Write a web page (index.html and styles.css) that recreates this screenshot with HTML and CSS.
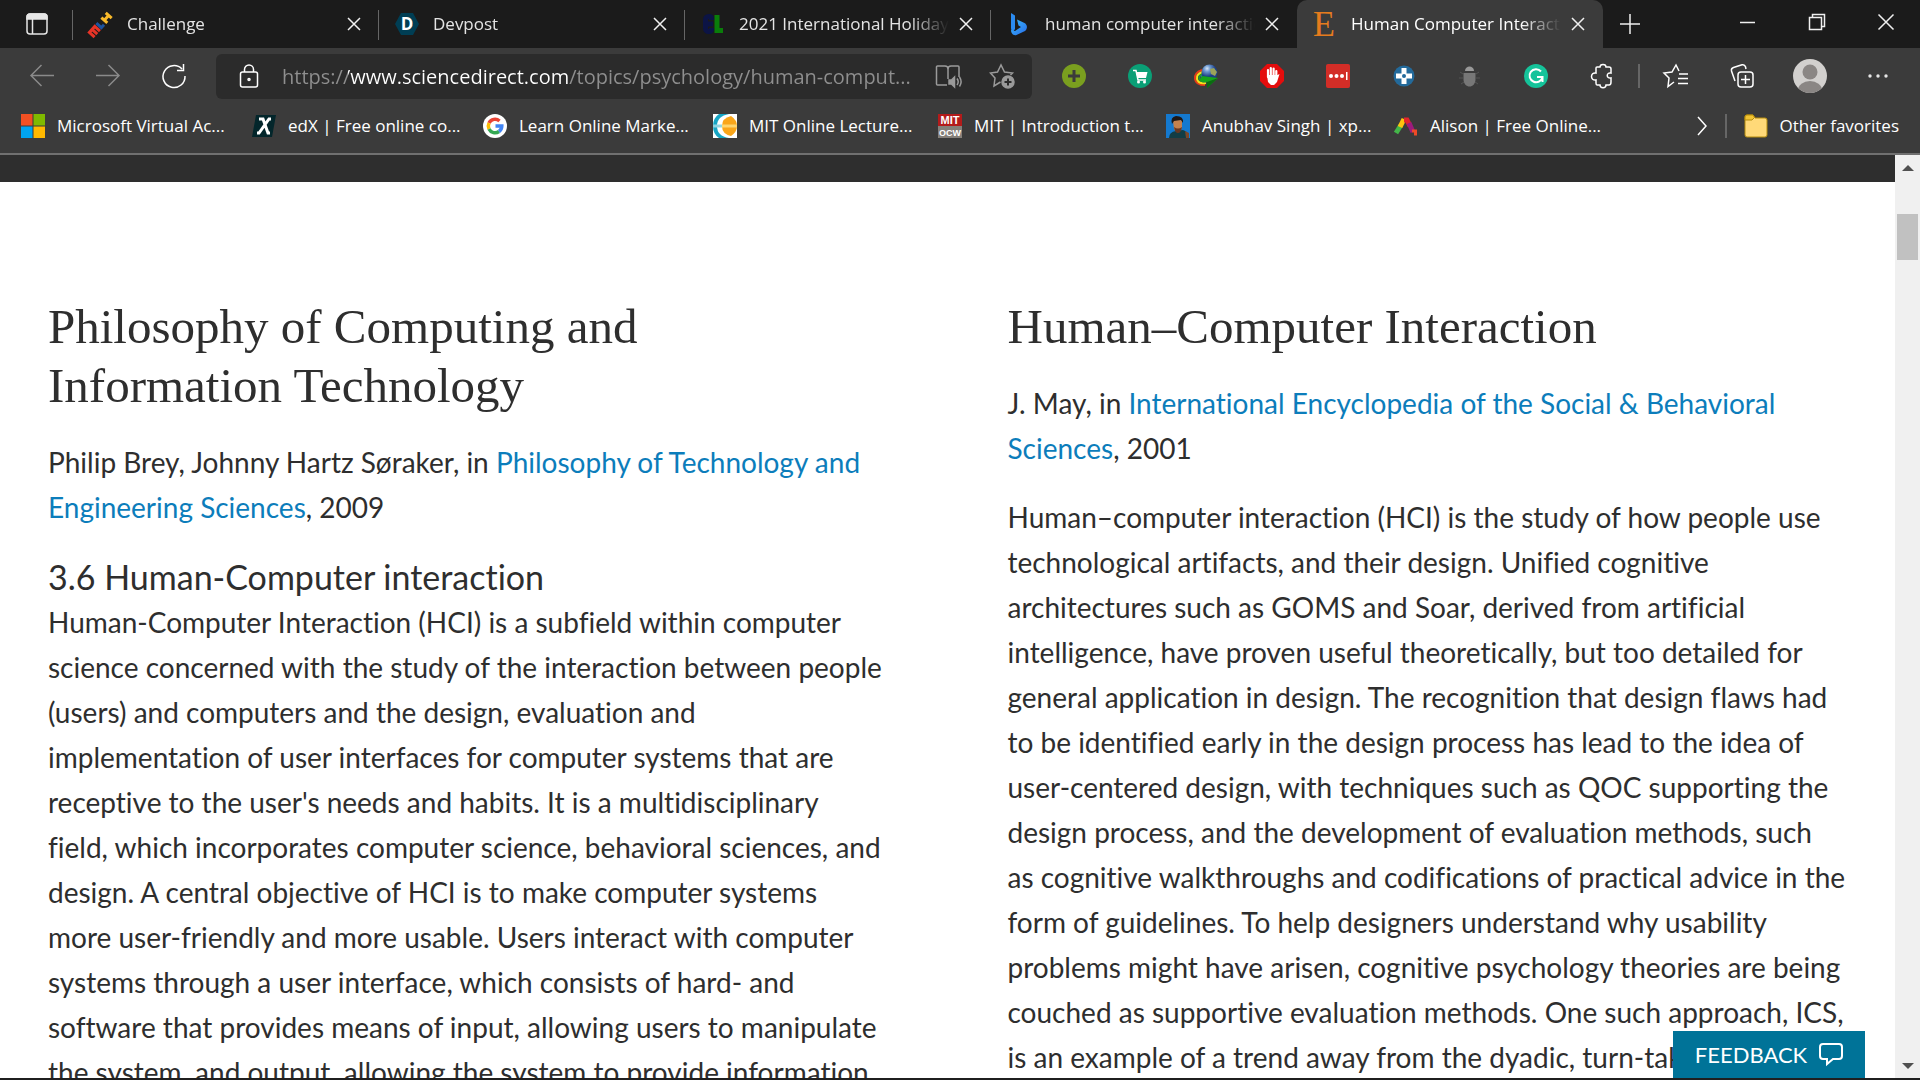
FILE: index.html
```html
<!DOCTYPE html>
<html lang="en">
<head>
    <meta charset="UTF-8">
    <meta name="viewport" content="width=device-width, initial-scale=1.0">
    <title>Human Computer Interaction</title>
    <link rel="stylesheet" href="styles.css">
</head>
<body>

    <header class="browser">
        <!-- Tabs -->
        <div class="tab-bar">
            <button class="tab-menu" aria-label="Tab actions">
                <svg width="22" height="22" viewBox="0 0 22 22" fill="none" stroke="#e6e6e6" stroke-width="1.5"><rect x="1" y="1" width="20" height="20" rx="3"/><path d="M1 6V4a3 3 0 0 1 3-3h14a3 3 0 0 1 3 3v2z" fill="#e6e6e6"/><path d="M6.500 6v15"/></svg>
            </button>
            <div class="tab">
                <svg class="icon" viewBox="0 0 24 24" fill="none" stroke-width="3"><g transform="rotate(-48 12 12)"><path d="M-2 16V9h8v7M2 9v7" stroke="#e73427"/><path d="M9.500 8v6.700h4" stroke="#1d539f"/><path d="M17 8v8M23.500 8v8M17 12h6" stroke="#f8b92a"/></g></svg>
                <span class="tab-title">Challenge</span>
                <button class="close" aria-label="Close tab"><svg width="14" height="14" viewBox="0 0 14 14"><path d="M1 1l12 12M13 1L1 13"/></svg></button>
            </div>
            <div class="tab">
                <svg class="icon" viewBox="0 0 24 24"><path d="M6 1h12l6 11-6 11H6L0 12z" fill="#003e54"/><text x="12" y="18" text-anchor="middle" class="logo-d">D</text></svg>
                <span class="tab-title">Devpost</span>
                <button class="close" aria-label="Close tab"><svg width="14" height="14" viewBox="0 0 14 14"><path d="M1 1l12 12M13 1L1 13"/></svg></button>
            </div>
            <div class="tab">
                <svg class="icon" viewBox="0 0 24 24" fill="none" stroke-width="5"><path d="M10.500 8V6.500a2 2 0 0 0-2-2h-1a3 3 0 0 0-3 3v9a3 3 0 0 0 3 3h1a2 2 0 0 0 2-2V16M6 12h6" stroke="#0c1445"/><path d="M16 3v15.500h6" stroke="#0a7d0a"/></svg>
                <span class="tab-title">2021 International Holiday Hack</span>
                <button class="close" aria-label="Close tab"><svg width="14" height="14" viewBox="0 0 14 14"><path d="M1 1l12 12M13 1L1 13"/></svg></button>
            </div>
            <div class="tab">
                <svg class="icon" viewBox="0 0 24 24"><defs><linearGradient id="bing" x1="0" y1="0" x2="1" y2="1"><stop offset="0" stop-color="#37bdff"/><stop offset="1" stop-color="#2a6be8"/></linearGradient></defs><path d="M4 1l4 2.500V17l-2 3c-1-.500-2-2-2-4z" fill="#2b8bf0"/><path d="M10 7.500l7 3.200c4 2 3.500 6 1 8.300L9.500 23C6 24 4 21 4 18l4 1 6-4-2.500-1.500z" fill="url(#bing)"/></svg>
                <span class="tab-title">human computer interaction</span>
                <button class="close" aria-label="Close tab"><svg width="14" height="14" viewBox="0 0 14 14"><path d="M1 1l12 12M13 1L1 13"/></svg></button>
            </div>
            <div class="tab active">
                <span class="icon logo-e">E</span>
                <span class="tab-title">Human Computer Interaction</span>
                <button class="close" aria-label="Close tab"><svg width="14" height="14" viewBox="0 0 14 14"><path d="M1 1l12 12M13 1L1 13"/></svg></button>
            </div>
            <button class="new-tab" aria-label="New tab"><svg width="22" height="22" viewBox="0 0 22 22"><path d="M11 1v20M1 11h20"/></svg></button>
            <div class="window-buttons">
                <button aria-label="Minimize"><svg width="16" height="16" viewBox="0 0 16 16"><path d="M0 8.500h15"/></svg></button>
                <button aria-label="Restore"><svg width="16" height="16" viewBox="0 0 16 16"><path d="M.500 3.500h12v12H.500zM3.500 3V.500h12v12H13"/></svg></button>
                <button aria-label="Close"><svg width="16" height="16" viewBox="0 0 16 16"><path d="M.500.500l15 15M15.500.500l-15 15"/></svg></button>
            </div>
        </div>

        <!-- Address bar and extensions -->
        <div class="toolbar">
            <button class="tool dim" aria-label="Back"><svg class="icon line" viewBox="0 0 24 24"><path d="M24 11.500H1M11.500 1L1 11.500 11.500 22"/></svg></button>
            <button class="tool dim" aria-label="Forward"><svg class="icon line" viewBox="0 0 24 24"><path d="M0 11.500h23M12.500 1L23 11.500 12.500 22"/></svg></button>
            <button class="tool" aria-label="Refresh"><svg class="icon line" viewBox="0 0 24 24"><path d="M20 5A11 11 0 1 0 23 12M21.500 0v6.500H15"/></svg></button>
            <div class="address">
                <button class="site-info" aria-label="Site information"><svg class="icon line" viewBox="0 0 24 24"><rect x="3.500" y="8" width="17" height="15" rx="2"/><path d="M7.500 8V5.500a4.500 4.500 0 0 1 9 0V8"/><circle cx="12" cy="15.500" r="1"/></svg></button>
                <input class="url" type="text" aria-label="Address" value="https://www.sciencedirect.com/topics/psychology/human-comput...">
                <button class="in-address" aria-label="Immersive reader"><svg class="icon line" viewBox="0 0 24 24"><path d="M11 21H1.500a1 1 0 0 1-1-1V3a1 1 0 0 1 1-1H9a3 3 0 0 1 3 3v10M12 5a3 3 0 0 1 3-3h7a1 1 0 0 1 1 1v10M21 14.500c1.500 2 1.500 4.500 0 6.500M23.500 13c2 3 2 6.500 0 9.500"/><path d="M13 16h2.500l3-3v10l-3-3H13z" fill="currentColor"/></svg></button>
                <button class="in-address" aria-label="Add to favorites"><svg class="icon line" viewBox="0 0 24 24"><path d="M10.500 18L4 22l1-8-4.500-5 7-1L11 1l3.500 7 8 1-2 2"/><circle cx="18" cy="18" r="6" fill="currentColor"/><path d="M18 14.500v7M14.500 18h7" stroke="#2b2b2b" stroke-width="2"/></svg></button>
            </div>
            <button class="tool" aria-label="Add extension"><svg class="icon" viewBox="0 0 24 24"><circle cx="12" cy="12" r="12" fill="#7a9f1f"/><path d="M12 6v12M6 12h12" stroke="#3b3b3b" stroke-width="3"/></svg></button>
            <button class="tool" aria-label="Shopping"><svg class="icon" viewBox="0 0 24 24"><circle cx="12" cy="12" r="12" fill="#0a9f76"/><path d="M5 6.500h3l2 9.500h8" fill="none" stroke="#fff" stroke-width="1.500"/><path d="M8 8h11.500L18 14H9.500z" fill="#fff"/><circle cx="10.500" cy="18" r="1.500" fill="#fff"/><circle cx="16.500" cy="18" r="1.500" fill="#fff"/></svg></button>
            <button class="tool" aria-label="Download manager"><svg class="icon" viewBox="0 0 24 24"><defs><radialGradient id="globe" cx=".35" cy=".25"><stop offset="0" stop-color="#d9e6f7"/><stop offset=".4" stop-color="#6d99d0"/><stop offset="1" stop-color="#1d3f86"/></radialGradient></defs><g fill="none" stroke-width="2"><path d="M8 6Q0 9 1 15t10 6" stroke="#e33d18"/><path d="M9 8Q2 10 3 15t9 4" stroke="#f5e31c"/><path d="M9 10Q4 12 5.500 15t7 2.500" stroke="#1f9a35"/><path d="M10 11Q6 13 9 15.500" stroke="#2b5fd0"/></g><circle cx="15.500" cy="8.500" r="8" fill="url(#globe)"/><path d="M16 5l4-1 3 4-2 4-4-2z" fill="#9ba35a"/><path d="M8 12l16 2-11 10v-6l-8-1z" fill="#16a51b"/><path d="M13 18l11-4-11 10z" fill="#0b6a12"/></svg></button>
            <button class="tool" aria-label="Ad blocker"><svg class="icon" viewBox="0 0 24 24"><path d="M7 0h10l7 7v10l-7 7H7l-7-7V7z" fill="#e40d0d"/><path d="M8 13V6M10.800 12V4M13.600 12V4.500M16.300 13V7" stroke="#fff" stroke-width="2.200" stroke-linecap="round"/><path d="M7 11h10.500l2-1-2.500 8-3 3h-3l-3-3z" fill="#fff"/></svg></button>
            <button class="tool" aria-label="Passwords"><svg class="icon" viewBox="0 0 24 24"><rect width="24" height="24" rx="2" fill="#d32d27"/><g fill="#fff"><circle cx="5" cy="12" r="2"/><circle cx="10.500" cy="12" r="2"/><circle cx="16" cy="12" r="2"/><path d="M20 8h1.500v8H20z"/></g></svg></button>
            <button class="tool" aria-label="Health"><svg class="icon" viewBox="0 0 24 24"><circle cx="12" cy="12" r="10.500" fill="#236a9b"/><path d="M9.500 4h5v5.500H20v5h-5.500V20h-5v-5.500H4v-5h5.500z" fill="#fff"/><circle cx="12" cy="12" r="2" fill="#236a9b"/></svg></button>
            <button class="tool" aria-label="Bug tool"><svg class="icon" viewBox="0 0 24 24"><path d="M7 7c0-6 9-6 9 0z" fill="#999"/><path d="M5.500 9h12v6c0 10-12 10-12 0z" fill="#777"/><path d="M2 8l3 2M21 8l-3 2M1 14h4M22 14h-4M3 20l3-2M20 20l-3-2" stroke="#555"/></svg></button>
            <button class="tool" aria-label="Grammar"><svg class="icon" viewBox="0 0 24 24"><circle cx="12" cy="12" r="12" fill="#15c39a"/><path d="M17 7.500A6.500 6.500 0 1 0 18.500 12.500M13 13h5.500v5" fill="none" stroke="#fff" stroke-width="2"/></svg></button>
            <button class="tool" aria-label="Extensions"><svg class="icon line" viewBox="0 0 24 24"><path d="M6 4q0-1 1-1h3c0-3.500 6-3.500 6 0h3q2 0 2 2v4c-5-1-5 6 0 5v4q0 3-2 3h-3c0 3.500-6 3.500-6 0H7q-1 0-1-2v-3c-6 1-6-8 0-7z"/></svg></button>
            <span class="divider"></span>
            <button class="tool" aria-label="Favorites"><svg class="icon line" viewBox="0 0 24 24"><path d="M10 18l-6 4.500 1-8.500-5-5 8-1 4-7 3 6M15 10h9M14 14.500h10M14 19.500h10"/></svg></button>
            <button class="tool" aria-label="Collections"><svg class="icon line" viewBox="0 0 24 24"><rect x="8" y="8" width="15" height="15" rx="3"/><path d="M15.500 11v9M11 15.500h9M5 17L1.500 7a3 3 0 0 1 2-3.500L12 .800a3 3 0 0 1 3.500 2L16 5"/></svg></button>
            <button class="tool profile" aria-label="Profile"><svg width="34" height="34" viewBox="0 0 34 34"><defs><clipPath id="face"><circle cx="17" cy="17" r="17"/></clipPath></defs><g clip-path="url(#face)"><path d="M0 0h34v34H0z" fill="#d2d0ce"/><circle cx="17" cy="13" r="7.500" fill="#8a8684"/><ellipse cx="17" cy="31" rx="12" ry="9" fill="#8a8684"/></g></svg></button>
            <button class="tool" aria-label="Settings and more"><svg width="20" height="4" viewBox="0 0 20 4" fill="#e6e6e6"><circle cx="2" cy="2" r="1.700"/><circle cx="10" cy="2" r="1.700"/><circle cx="18" cy="2" r="1.700"/></svg></button>
        </div>

        <!-- Favorites -->
        <nav class="favorites">
            <div class="favorites-list">
                <a href="#"><svg class="icon" viewBox="0 0 24 24"><path d="M0 0h11.500v11.500H0z" fill="#f25022"/><path d="M12.500 0H24v11.500H12.500z" fill="#7fba00"/><path d="M0 12.500h11.500V24H0z" fill="#00a4ef"/><path d="M12.500 12.500H24V24H12.500z" fill="#ffb900"/></svg>Microsoft Virtual Ac...</a>
                <a href="#"><svg class="icon" viewBox="0 0 24 24"><path d="M4 1h20l-4 22H0z" fill="#03262b"/><path d="M7 5h4l5 14h2M19 5h-2L7 19H5" fill="none" stroke="#fff" stroke-width="3"/></svg>edX | Free online co...</a>
                <a href="#"><svg class="icon" viewBox="0 0 24 24" fill="none" stroke-width="3.500"><circle cx="12" cy="12" r="12" fill="#fff"/><path d="M16.500 7A6.700 6.700 0 0 0 6 9" stroke="#ea4335"/><path d="M6 9a7 7 0 0 0 0 6" stroke="#fbbc05"/><path d="M6 15a6.700 6.700 0 0 0 10 2.500" stroke="#34a853"/><path d="M12.500 12h6.300q0 3.500-2.800 5.500" stroke="#4285f4"/></svg>Learn Online Marke...</a>
                <a href="#"><svg class="icon" viewBox="0 0 24 24"><path d="M0 0h24v24H0z" fill="#fff"/><path d="M16 0Q4 2 4 12t12 12H6Q0 20 0 12T6 0z" fill="#16a5c4"/><path d="M0 10.500h9v3H0z" fill="#8fd5e2"/><path d="M18 2q6 4 6 10t-6 10Q9 20 9 12t9-10z" fill="#faa61a"/><path d="M9 10.500h15v3H9z" fill="#ffd56f"/></svg>MIT Online Lecture...</a>
                <a href="#"><svg class="icon" viewBox="0 0 24 24"><path d="M0 0h24v12H0z" fill="#b31b1b"/><path d="M0 12h24v12H0z" fill="#85807a"/><text x="12" y="10" text-anchor="middle" class="logo-mit">MIT</text><text x="12" y="22" text-anchor="middle" class="logo-ocw">OCW</text></svg>MIT | Introduction t...</a>
                <a href="#"><svg class="icon" viewBox="0 0 24 24"><path d="M0 0h24v24H0z" fill="#1479cf"/><path d="M3 24q0-6 7-7l7-1q6 2 6 8z" fill="#123d45"/><path d="M19 17l4 2v5h-3z" fill="#7b4728"/><path d="M7 7q5-4 9 0v7q-4 8-8 1z" fill="#c4814d"/><path d="M6 10Q4 3 10 2q8 0 7 7l-2-3-7 1z" fill="#1e1715"/><path d="M8 13q4 3 8 0-1 6-4 6t-4-6" fill="#683822"/></svg>Anubhav Singh | xp...</a>
                <a href="#"><svg class="icon" viewBox="0 0 24 24" fill="none" stroke-width="5"><path d="M2 19L7 11" stroke="#44b649"/><path d="M6 13l4-8" stroke="#ffc20e"/><path d="M10 6h3l3 6" stroke="#e2252b"/><path d="M15 9l4 9" stroke="#9b1b7d"/><path d="M18 17h5M20 20h3" stroke="#ef4a27" stroke-width="3"/></svg>Alison | Free Online...</a>
            </div>
            <button class="more" aria-label="More favorites"><svg width="10" height="18" viewBox="0 0 10 18"><path d="M1 0l8 9-8 9"/></svg></button>
            <span class="divider"></span>
            <a class="other" href="#"><svg class="icon" viewBox="0 0 24 24" stroke="#b48b0c"><path d="M1 3q0-2 2-2h6l2 3h10q2 0 2 2v15q0 2-2 2H3q-2 0-2-2z" fill="#ffd978"/><path d="M1 6V3q0-2 2-2h6l1.500 2.500L8 6z" fill="#f2c433"/></svg>Other favorites</a>
        </nav>
    </header>

    <div class="viewport">
        <main class="page">
            <div class="page-band"></div>
            <div class="articles">
                <article>
                    <h2>Philosophy of Computing and<br>Information Technology</h2>
                    <p class="byline">Philip Brey, Johnny Hartz Søraker, in <a href="#">Philosophy of Technology and<br>Engineering Sciences</a>, 2009</p>
                    <h3>3.6 Human-Computer interaction</h3>
                    <p>Human-Computer Interaction (HCI) is a subfield within computer<br>
                    science concerned with the study of the interaction between people<br>
                    (users) and computers and the design, evaluation and<br>
                    implementation of user interfaces for computer systems that are<br>
                    receptive to the user's needs and habits. It is a multidisciplinary<br>
                    field, which incorporates computer science, behavioral sciences, and<br>
                    design. A central objective of HCI is to make computer systems<br>
                    more user-friendly and more usable. Users interact with computer<br>
                    systems through a user interface, which consists of hard- and<br>
                    software that provides means of input, allowing users to manipulate<br>
                    the system, and output, allowing the system to provide information</p>
                </article>
                <article>
                    <h2>Human–Computer Interaction</h2>
                    <p class="byline">J. May, in <a href="#">International Encyclopedia of the Social &amp; Behavioral<br>Sciences</a>, 2001</p>
                    <p>Human–computer interaction (HCI) is the study of how people use<br>
                    technological artifacts, and their design. Unified cognitive<br>
                    architectures such as GOMS and Soar, derived from artificial<br>
                    intelligence, have proven useful theoretically, but too detailed for<br>
                    general application in design. The recognition that design flaws had<br>
                    to be identified early in the design process has lead to the idea of<br>
                    user-centered design, with techniques such as QOC supporting the<br>
                    design process, and the development of evaluation methods, such<br>
                    as cognitive walkthroughs and codifications of practical advice in the<br>
                    form of guidelines. To help designers understand why usability<br>
                    problems might have arisen, cognitive psychology theories are being<br>
                    couched as supportive evaluation methods. One such approach, ICS,<br>
                    is an example of a trend away from the dyadic, turn-taking</p>
                </article>
            </div>
            <button class="feedback">FEEDBACK <svg width="24" height="23" viewBox="0 0 24 23" fill="none" stroke="#fff" stroke-width="2"><path d="M4 1h16q3 0 3 3v9q0 3-3 3h-6l-6 5v-5H4q-3 0-3-3V4q0-3 3-3z"/></svg></button>
        </main>
        <div class="scrollbar">
            <svg width="12" height="6" viewBox="0 0 12 6"><path d="M0 6l6-6 6 6z"/></svg>
            <div class="thumb"></div>
            <svg class="down" width="12" height="6" viewBox="0 0 12 6"><path d="M0 0l6 6 6-6z"/></svg>
        </div>
    </div>

</body>
</html>
```

FILE: styles.css
```css
* {
    margin: 0;
    padding: 0;
    box-sizing: border-box;
}

body {
    display: flex;
    flex-direction: column;
    height: 100vh;
    overflow: hidden;
    background: #fff;
    border-bottom: 2px solid #1f1f1f;
    color: #2e2e2e;
    font-family: "Open Sans", sans-serif;
}

button {
    display: flex;
    align-items: center;
    justify-content: center;
    background: none;
    border: none;
    color: inherit;
    font: inherit;
}

a {
    color: #0c7dbb;
    text-decoration: none;
}

svg {
    flex: none;
    overflow: visible;
}

.icon {
    width: 24px;
    height: 24px;
    flex: none;
}

.line {
    fill: none;
    stroke: currentColor;
    stroke-width: 1.5;
}

/* Browser chrome */
.browser {
    background: #3b3b3b;
    border-bottom: 2px solid #707070;
    color: #fff;
    font-size: 17px;
}

.tab-bar {
    display: flex;
    height: 48px;
    background: #1b1b1b;
}

.close path,
.new-tab path,
.window-buttons path {
    fill: none;
    stroke: #f0f0f0;
    stroke-width: 1.5;
}

.tab-menu {
    width: 73px;
}

.tab {
    position: relative;
    display: flex;
    align-items: center;
    width: 306px;
    padding: 0 18px 0 16px;
    color: #e4e4e4;
}

.tab::before {
    content: "";
    position: absolute;
    left: -1px;
    top: 10px;
    width: 1px;
    height: 30px;
    background: #666;
}

.tab.active {
    background: #3b3b3b;
    border-radius: 10px 10px 0 0;
    color: #fff;
}

.tab.active::before {
    display: none;
}

.tab-title {
    flex: 1;
    margin: 0 10px 0 14px;
    padding-bottom: 2px;
    overflow: hidden;
    white-space: nowrap;
    mask-image: linear-gradient(to right, #000 calc(100% - 40px), transparent);
}

.close svg,
.window-buttons svg {
    display: block;
}

.logo-d {
    fill: #fff;
    font: bold 17px "Open Sans", sans-serif;
}

.logo-e {
    color: #e57b1e;
    font: 36px/24px "Liberation Serif", serif;
}

.logo-mit,
.logo-ocw {
    fill: #fff;
    font: bold 11px "Liberation Sans", sans-serif;
}

.logo-ocw {
    font-size: 9px;
}

.new-tab {
    width: 54px;
}

.window-buttons {
    display: flex;
    height: 44px;
    margin-left: auto;
}

.window-buttons button {
    width: 69px;
}

.toolbar {
    display: flex;
    align-items: center;
    height: 56px;
    padding: 0 9px;
}

.tool {
    width: 66px;
    height: 44px;
}

.profile {
    width: 70px;
}

.dim {
    color: #8a8a8a;
}

.address {
    display: flex;
    align-items: center;
    flex: 1;
    height: 45px;
    margin: 0 9px;
    padding: 0 18px 0 21px;
    background: #2b2b2b;
    border-radius: 6px;
}

.in-address {
    margin-left: 30px;
    color: #9a9a9a;
}

/* the host name is white, the rest of the address is grey */
.url {
    flex: 1;
    min-width: 0;
    margin-left: 21px;
    border: none;
    outline: none;
    background: linear-gradient(to right, #8f8f8f 66px, #fff 66px, #fff 286px, #8f8f8f 286px);
    background-clip: text;
    color: transparent;
    font: 20px "Open Sans", sans-serif;
}

.url + .in-address {
    margin-left: 20px;
}

.divider {
    width: 2px;
    height: 24px;
    margin: 0 3px;
    background: #666;
}

.favorites {
    display: flex;
    align-items: center;
    height: 49px;
    padding: 0 21px 6px;
}

.favorites a {
    display: flex;
    align-items: center;
    gap: 12px;
    color: #fff;
    white-space: nowrap;
}

.favorites-list {
    display: grid;
    grid-template-columns: 231px 231px 230px 225px 228px 228px 1fr;
    flex: 1;
}

.more {
    width: 40px;
}

.more path {
    fill: none;
    stroke: #fff;
    stroke-width: 1.5;
}

.other {
    margin-left: 14px;
}

/* Web page */
.viewport {
    display: flex;
    flex: 1;
    min-height: 0;
}

.page {
    position: relative;
    flex: 1;
    overflow: hidden;
}

.page-band {
    height: 27px;
    background: #2e2e2e;
}

.articles {
    display: grid;
    grid-template-columns: 1fr 1fr;
    gap: 120px;
    padding: 115px 48px 0;
    font-family: Lato, sans-serif;
    font-size: 28px;
    font-variant-ligatures: none;
    line-height: 45px;
    white-space: nowrap;
}

h2 {
    margin-bottom: 25px;
    font: 49px/59px "Liberation Serif", serif;
}

h3 {
    font-size: 34px;
    font-weight: normal;
    line-height: 46px;
}

.byline {
    margin-bottom: 24px;
}

.feedback {
    position: absolute;
    right: 30px;
    bottom: 0;
    gap: 12px;
    width: 192px;
    height: 47px;
    background: #007398;
    color: #fff;
    font: 22px Lato, sans-serif;
}

.scrollbar {
    display: flex;
    flex-direction: column;
    align-items: center;
    width: 25px;
    padding: 10px 0 9px;
    background: #f0f0f0;
    fill: #505050;
}

.thumb {
    width: 21px;
    height: 46px;
    margin-top: 43px;
    background: #c1c1c1;
}

.down {
    margin-top: auto;
}
```
